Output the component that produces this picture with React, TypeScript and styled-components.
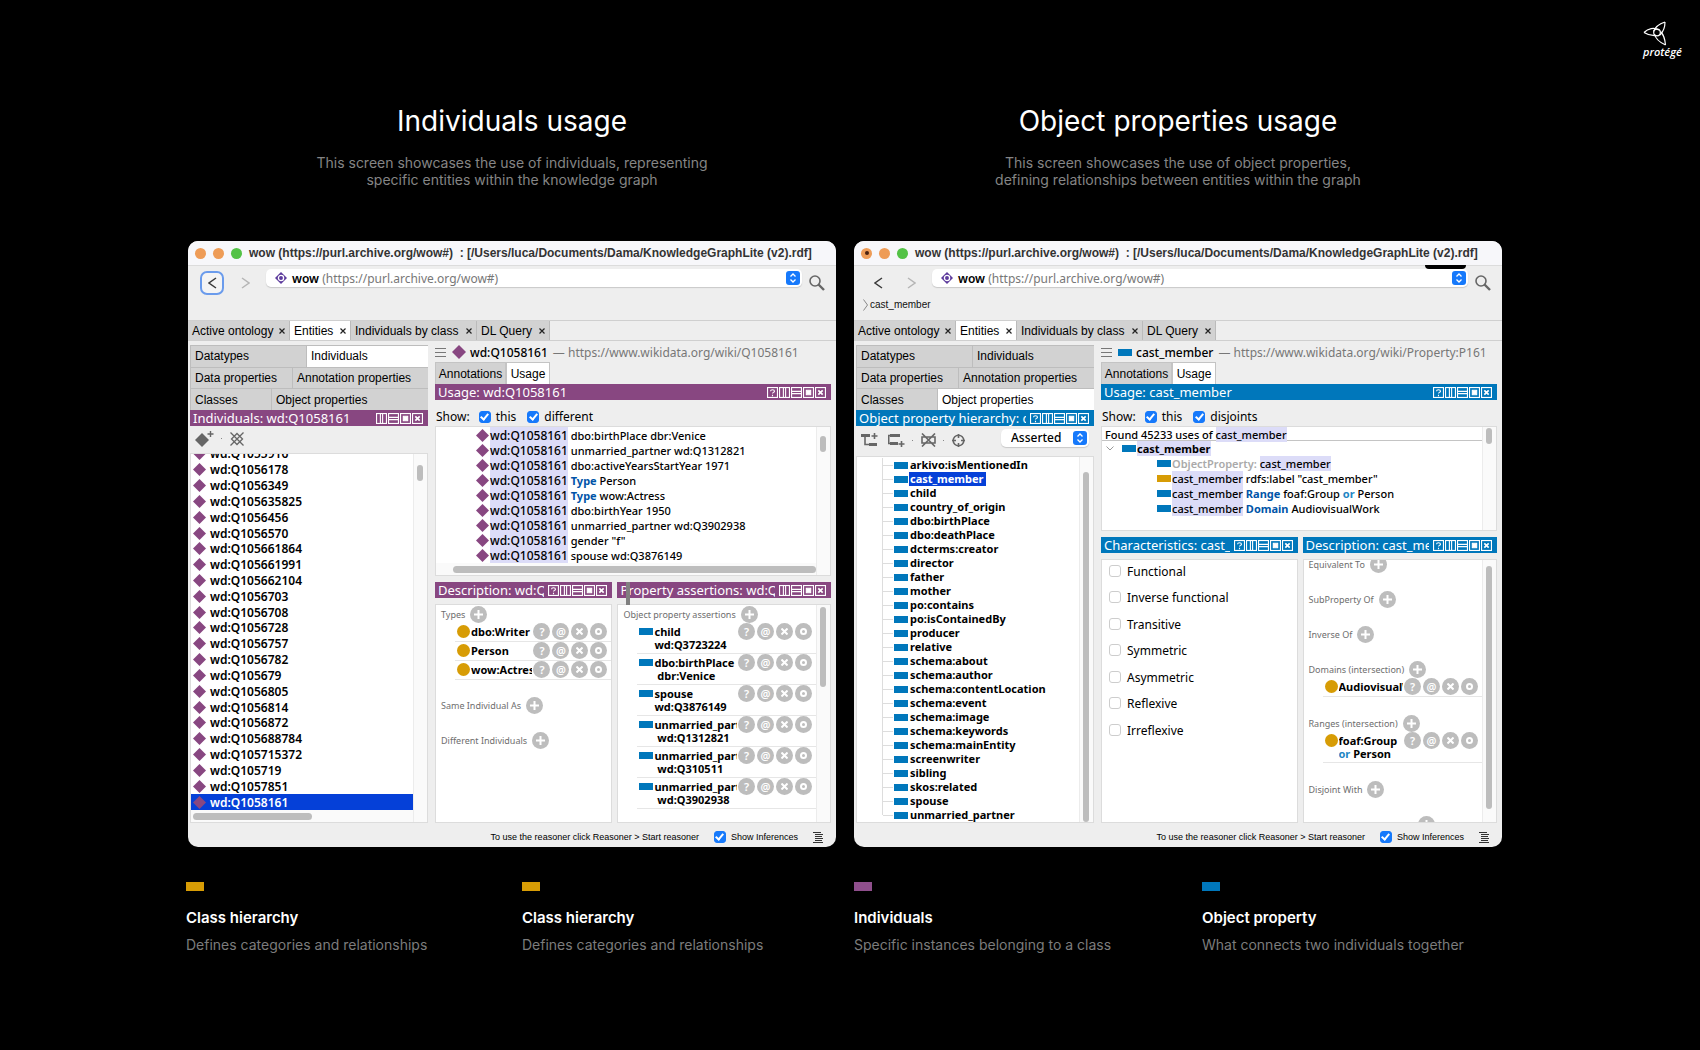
import React from "react";
import styled, { createGlobalStyle, css } from "styled-components";

const PURPLE = "#884781";
const BLUE = "#0077bb";
const GOLD = "#d79c05";
const GREY = "#bdbdbd";
const LUCIDA = `"Noto Sans", "Open Sans", sans-serif`;
const HELVETICA = `"Liberation Sans", Arial, sans-serif`;
const INTER = `Inter, Roboto, sans-serif`;

const GlobalStyle = createGlobalStyle`
  *, *::before, *::after { box-sizing: border-box; }
  body { margin: 0; background: #000; font-family: ${INTER}; }
  h1, h2, p, ul { margin: 0; padding: 0; }
  ul { list-style: none; }
  button, select, input { font: inherit; margin: 0; padding: 0; border: 0; background: none; color: inherit; }
  svg { display: block; flex: none; }
`;

/* ---------- page ---------- */

const Page = styled.main`
  min-height: 100vh;
  background: #000;
  color: #fff;
`;

const TopBar = styled.header`
  display: flex;
  justify-content: flex-end;
  height: 101px;
  padding: 21px 19px 0 0;
`;

const Brand = styled.div`
  display: flex;
  flex-direction: column;
  width: 38px;
  font: italic 600 11px/12px "Open Sans", sans-serif;
`;

const Showcase = styled.div`
  display: grid;
  grid-template-columns: 1fr 1fr;
  gap: 18px;
  padding: 0 198px 0 188px;
`;

const Column = styled.section`
  display: flex;
  flex-direction: column;
  min-width: 0;
`;

const Title = styled.h1`
  font: 400 28px/40px ${INTER};
  text-align: center;
`;

const Lead = styled.p`
  height: 87px;
  margin-top: 13px;
  color: #858585;
  font: 400 14px/17px ${INTER};
  text-align: center;
`;

const Legend = styled.ul`
  display: grid;
  grid-template-columns: 336fr 332fr 348fr 300fr;
  padding: 35px 198px 0 186px;
`;

const Swatch = styled.i<{ $color: string }>`
  display: block;
  width: 18px;
  height: 9px;
  background: ${(p) => p.$color};
`;

const LegendTitle = styled.h2`
  margin-top: 16px;
  font: 600 15px/22px ${INTER};
`;

const LegendText = styled.p`
  margin-top: 6px;
  color: #7c7c7c;
  font: 400 14px/20px ${INTER};
`;

/* ---------- window ---------- */

const Window = styled.article`
  display: flex;
  flex-direction: column;
  overflow: hidden;
  border-radius: 10px;
  background: #eee;
  color: #000;
  font: 12px/15px ${LUCIDA};
  white-space: nowrap;
`;

const TitleBar = styled.div`
  display: flex;
  align-items: center;
  height: 25px;
  padding-left: 7px;
  border-bottom: 1px solid #dcdcdc;
  background: #f7f7fa;
`;

const Light = styled.button<{ $color: string; $dot?: boolean }>`
  display: grid;
  place-items: center;
  width: 11px;
  height: 11px;
  margin-right: 7px;
  border-radius: 50%;
  background: ${(p) => p.$color};
  ${(p) =>
    p.$dot &&
    css`
      &::after {
        content: "";
        width: 4px;
        height: 4px;
        border-radius: 50%;
        background: #4a2110;
      }
    `}
`;

const WindowTitle = styled.span`
  color: #333;
  font: 700 12px/16px ${HELVETICA};
  white-space: pre;
`;

const Toolbar = styled.div`
  display: grid;
  grid-template-columns: 24px 42px 1fr 34px;
  grid-template-rows: 29px 1fr;
  height: 54px;
  padding: 3px 0 0 12px;
`;

const NavButton = styled.button<{ $focus?: boolean; $muted?: boolean }>`
  display: grid;
  place-items: center;
  width: 24px;
  height: 24px;
  margin-top: 2px;
  border: 2px solid ${(p) => (p.$focus ? "#6a9bec" : "transparent")};
  border-radius: 7px;
  background: ${(p) => (p.$focus ? "#f4f4f4" : "none")};
  color: ${(p) => (p.$muted ? "#b5b5b5" : "#3a3a3a")};
  justify-self: ${(p) => (p.$muted ? "center" : "start")};
`;

const Combo = styled.div`
  position: relative;
  display: flex;
  align-items: center;
  height: 18px;
  padding: 0 2px 0 9px;
  border-radius: 5px;
  background: #fff;
  box-shadow: 0 1px 1px #c8c8c8;
`;

const ComboText = styled.span`
  flex: 1;
  padding-left: 5px;
  color: #777;
  b { color: #000; font-weight: 600; }
`;

const HiddenSelect = styled.select`
  position: absolute;
  inset: 0;
  width: 100%;
  opacity: 0;
`;

const Stain = styled.i`
  position: absolute;
  top: -4px;
  right: 2px;
  width: 41px;
  height: 4px;
  border-radius: 0 0 12px 12px;
  background: #000;
`;

const SearchButton = styled.button`
  display: grid;
  place-items: center;
  width: 18px;
  height: 18px;
  margin: 5px 0 0 6px;
`;

const Crumb = styled.a`
  display: flex;
  align-items: center;
  grid-column: 1 / -1;
  gap: 2px;
  height: 12px;
  margin: 1px 0 0 -3px;
  color: #111;
  font: 10px/12px ${HELVETICA};
  text-decoration: none;
`;

const MainTabs = styled.nav`
  display: flex;
  height: 21px;
  border: 1px solid #cfcfcf;
  border-width: 1px 0;
  font: 12px/18px ${HELVETICA};
`;

const MainTab = styled.button<{ $active?: boolean; $width: number }>`
  display: flex;
  align-items: center;
  justify-content: space-between;
  width: ${(p) => p.$width}px;
  padding: 1px 4px 0;
  border-right: 1px solid #bbb;
  background: ${(p) => (p.$active ? "#fff" : "#d2d2d2")};
`;

const Body = styled.div`
  display: grid;
  grid-template-columns: 238px minmax(0, 1fr);
  gap: 7px;
  min-height: 482px;
  padding: 4px 5px 0 2px;
`;

const Pane = styled.div`
  display: flex;
  flex-direction: column;
  min-width: 0;
`;

const EntityTabs = styled.div`
  display: grid;
  grid-auto-rows: 1fr;
  height: 65px;
  font: 12px/20px ${HELVETICA};
`;

const EntityRow = styled.div<{ $split: number }>`
  display: grid;
  grid-template-columns: ${(p) => p.$split}px 1fr;
`;

const EntityTab = styled.button<{ $active?: boolean }>`
  padding-left: 4px;
  border: 1px solid #bdbdbd;
  border-width: 1px 0 0 1px;
  background: ${(p) => (p.$active ? "#fff" : "#d2d2d2")};
  text-align: left;
`;

const Bar = styled.div<{ $color: string }>`
  position: relative;
  display: flex;
  align-items: center;
  gap: 1px;
  height: 16px;
  padding: 0 5px 0 3px;
  background: ${(p) => p.$color};
  color: #fff;
`;

const BarTitle = styled.h2`
  flex: 1;
  min-width: 0;
  margin-right: 3px;
  overflow: hidden;
  font: 400 13px/16px ${LUCIDA};
`;

const BarButton = styled.button`
  display: block;
  width: 11px;
  height: 11px;
`;

const Splitter = styled.i`
  position: absolute;
  top: 0;
  left: 9px;
  width: 4px;
  height: 23px;
  background: #808080;
`;

const Tools = styled.div<{ $height: number }>`
  display: flex;
  align-items: center;
  height: ${(p) => p.$height}px;
  padding: 0 5px 2px 5px;
  color: #000;
`;

const ToolButton = styled.button`
  display: block;
  margin-right: 3px;
`;

const Gap = styled.i<{ $width: number }>`
  flex: none;
  width: ${(p) => p.$width}px;
`;

const Dot = styled.i`
  width: 1px;
  height: 1px;
  margin: 0 8px 0 4px;
  background: #888;
`;

const MiniCombo = styled.label`
  display: flex;
  align-items: center;
  width: 88px;
  height: 18px;
  margin: 0 0 4px auto;
  padding-right: 2px;
  border-radius: 5px;
  background: #fff;
  box-shadow: 0 1px 1px #c8c8c8;
`;

const PlainSelect = styled.select`
  flex: 1;
  min-width: 0;
  padding-left: 10px;
  appearance: none;
  font: 500 12px/16px ${LUCIDA};
`;

const Well = styled.div<{ $height?: number }>`
  display: flex;
  min-height: 0;
  overflow: hidden;
  border: 1px solid #dcdcdc;
  background: #fff;
  ${(p) => (p.$height ? `height: ${p.$height}px;` : "flex: 1 1 0;")}
`;

const Stack = styled.div`
  display: flex;
  flex: 1;
  flex-direction: column;
  min-width: 0;
`;

const VTrack = styled.div`
  flex: none;
  width: 14px;
  padding: 0 4px 0 3px;
  border-left: 1px solid #ececec;
  background: #fafafa;
`;

const VThumb = styled.div<{ $top: number; $size: number }>`
  height: ${(p) => p.$size}px;
  margin-top: ${(p) => p.$top}px;
  border-radius: 4px;
  background: ${GREY};
`;

const HTrack = styled.div<{ $left: number }>`
  flex: none;
  height: 12px;
  padding: 3px 0 2px ${(p) => p.$left}px;
  background: #fafafa;
`;

const HThumb = styled.div<{ $size: string }>`
  width: ${(p) => p.$size};
  height: 7px;
  border-radius: 4px;
  background: ${GREY};
`;

const Clip = styled.div`
  display: flex;
  flex: 1;
  flex-direction: column;
  justify-content: flex-end;
  min-height: 0;
  overflow: hidden;
`;

const IndividualList = styled.ul`
  display: grid;
  flex: none;
  grid-auto-rows: 1fr;
  height: 364px;
  font-weight: 600;
`;

const IndividualItem = styled.li<{ $selected?: boolean }>`
  display: flex;
  align-items: center;
  gap: 4px;
  padding-left: 2px;
  background: ${(p) => (p.$selected ? "#0540d8" : "none")};
  color: ${(p) => (p.$selected ? "#fff" : "#000")};
`;

const Tree = styled.ul`
  display: grid;
  grid-auto-rows: 1fr;
  height: 367px;
  margin-top: 1px;
  font-size: 11px;
  font-weight: 700;
`;

const TreeItem = styled.li`
  display: flex;
  align-items: center;
  margin-left: 25px;
  border-left: 1px solid #ddd;
  &::before {
    content: "";
    width: 10px;
    height: 1px;
    margin-right: 1px;
    background: #ddd;
  }
  &:last-child { border-image: linear-gradient(#ddd 50%, transparent 50%) 1; }
`;

const TreeLabel = styled.span<{ $selected?: boolean }>`
  margin-left: 1px;
  padding: 0 2px 0 1px;
  background: ${(p) => (p.$selected ? "#0540d8" : "none")};
  color: ${(p) => (p.$selected ? "#fff" : "#000")};
  line-height: 14px;
`;

const Rect = styled.i<{ $color?: string }>`
  flex: none;
  width: 14px;
  height: 7px;
  background: ${(p) => p.$color || BLUE};
`;

const Disc = styled.i`
  flex: none;
  width: 13px;
  height: 13px;
  border-radius: 50%;
  background: ${GOLD};
`;

const EntityLine = styled.div`
  display: flex;
  align-items: center;
  height: 17px;
  padding-bottom: 3px;
  color: #777;
  b { margin: 0 5px 0 4px; color: #000; font-weight: 500; }
`;

const SubTabs = styled.div`
  display: flex;
  height: 22px;
  font: 12px/20px ${HELVETICA};
`;

const SubTab = styled.button<{ $active?: boolean; $width: number }>`
  width: ${(p) => p.$width}px;
  border: 1px solid #c4c4c4;
  border-width: 1px 1px 0;
  background: ${(p) => (p.$active ? "#fff" : "#d2d2d2")};
`;

const ShowRow = styled.div`
  display: flex;
  align-items: center;
  height: 26px;
  padding: 7px 0 0 1px;
`;

const CheckLabel = styled.label<{ $gap?: number }>`
  display: flex;
  align-items: center;
  gap: 5px;
  margin-left: ${(p) => p.$gap || 0}px;
`;

const Check = styled.input`
  display: grid;
  place-items: center;
  width: 12px;
  height: 12px;
  appearance: none;
  border: 1px solid #cdcdcd;
  border-radius: 3px;
  background: #fff;
  &:checked { border-color: #1679fb; background: #1679fb; }
  &:checked::after {
    content: "";
    width: 5px;
    height: 8px;
    margin-top: -2px;
    border: solid #fff;
    border-width: 0 2px 2px 0;
    transform: rotate(40deg);
  }
`;

const UsageList = styled.ul<{ $indent: number }>`
  flex: 1;
  min-height: 0;
  padding: 1px 0 0 ${(p) => p.$indent}px;
  overflow: hidden;
  font-size: 11px;
`;

const UsageItem = styled.li`
  display: flex;
  align-items: center;
  gap: 1px;
  height: 15px;
  font-weight: 500;
`;

const Mark = styled.mark<{ $size?: number }>`
  background: #dcdcf8;
  color: #000;
  font-size: ${(p) => (p.$size ? `${p.$size}px` : "inherit")};
`;

const Keyword = styled.b<{ $light?: boolean }>`
  color: ${(p) => (p.$light ? "#1f86c4" : "#0054a8")};
  font-weight: 700;
`;

const Faint = styled.b`
  color: #aaa;
  font-weight: 600;
`;

const Found = styled.div`
  height: 14px;
  padding-left: 3px;
  border-bottom: 1px solid #c4c4c4;
  font-size: 11px;
  font-weight: 500;
`;

const UsageRoot = styled.div`
  display: flex;
  align-items: center;
  gap: 1px;
  height: 14px;
  padding-left: 4px;
  font-size: 11px;
  font-weight: 700;
  svg { margin-right: 7px; }
`;

const Lower = styled.div<{ $cols: string }>`
  display: grid;
  flex: 1;
  grid-template-columns: ${(p) => p.$cols};
  gap: 5px;
  min-height: 0;
  margin-top: 6px;
`;

const LowerPane = styled(Pane)`
  gap: 6px;
`;

const Sections = styled.div`
  display: flex;
  flex: 1;
  flex-direction: column;
  min-width: 0;
  overflow: hidden;
  padding-top: 1px;
`;

const ScrolledSections = styled(Sections)`
  justify-content: flex-end;
  padding-top: 0;
`;

const SectionHead = styled.div<{ $space?: number }>`
  display: flex;
  flex: none;
  align-items: center;
  gap: 5px;
  height: 17px;
  margin-bottom: ${(p) => p.$space || 0}px;
  padding-left: 5px;
  color: #6e6e6e;
  font-size: 9px;
`;

const PeekingHead = styled.div`
  flex: none;
  height: 6px;
  padding-left: 114px;
  overflow: hidden;
`;

const Entry = styled.div<{ $rows: number; $space?: number }>`
  display: flex;
  flex: none;
  gap: 1px;
  height: ${(p) => (p.$rows === 1 ? 19 : 31)}px;
  margin: 0 0 ${(p) => p.$space || 0}px 19px;
  padding: 0 4px 0 2px;
  border-bottom: 1px solid #e6e6e6;
  font-size: 11px;
  font-weight: 700;
`;

const EntryIcon = styled.span`
  display: flex;
  flex: none;
  align-items: center;
  height: 16px;
`;

const EntryText = styled.div`
  flex: 1;
  min-width: 0;
  overflow: hidden;
  line-height: 13px;
  padding-top: 2px;
`;

const EntryButtons = styled.div`
  display: flex;
  flex: none;
  gap: 2px;
`;

const Round = styled.button`
  display: grid;
  flex: none;
  place-items: center;
  width: 17px;
  height: 17px;
  border-radius: 50%;
  background: ${GREY};
  color: #fff;
  font: 600 11px/16px ${LUCIDA};
`;

const Traits = styled.div`
  display: grid;
  grid-auto-rows: 1fr;
  height: 185px;
  padding-left: 7px;
`;

const Trait = styled(CheckLabel)`
  align-items: flex-start;
  gap: 6px;
  padding-top: 4px;
  input { margin-top: 1px; }
`;

const Status = styled.footer`
  display: flex;
  align-items: center;
  justify-content: flex-end;
  height: 24px;
  padding: 4px 13px 0 0;
  font: 9px/12px ${HELVETICA};
  svg { margin-left: 15px; }
`;

/* ---------- drawings ---------- */

const Logo = () => (
  <svg width="24" height="25" viewBox="0 0 24 25" fill="none" stroke="#fff" strokeWidth="1.200">
    <path d="M1 11.500C5 7.500 11 6 16 9M1 11.500C5 14 9 15 13.500 14.500" />
    <path d="M22 1C16 3 12 6 10.500 10.500M22 1C22 6 20 11 17 14" />
    <path d="M22.500 24C17 21.500 12.500 18 11.500 13M22.500 24C22 18 20 13 17.500 10.500" />
    <circle cx="14" cy="11.500" r="3.300" />
  </svg>
);

const Diamond = ({ size = 13 }: { size?: number }) => (
  <svg width={size} height={size} viewBox="0 0 14 14">
    <path d="M7 0L14 7L7 14L0 7Z" fill={PURPLE} />
  </svg>
);

const OntologyIcon = () => (
  <svg width="12" height="12" viewBox="0 0 12 12">
    <path d="M6 0L12 6L6 12L0 6Z" fill="#5c3a9c" />
    <circle cx="6" cy="6" r="2.600" fill="none" stroke="#fff" strokeWidth="1.300" />
  </svg>
);

const Chevron = ({ flip }: { flip?: boolean }) => (
  <svg width="9" height="12" viewBox="0 0 9 12" fill="none" stroke="currentColor" strokeWidth="1.500">
    <path d={flip ? "M1 1L8 6L1 11" : "M8 1L1 6L8 11"} />
  </svg>
);

const Stepper = () => (
  <svg width="14" height="14" viewBox="0 0 14 14">
    <rect width="14" height="14" rx="3" fill="#1679fb" />
    <path d="M4.500 5.500L7 3L9.500 5.500M4.500 8.500L7 11L9.500 8.500" fill="none" stroke="#fff" strokeWidth="1.300" />
  </svg>
);

const SearchIcon = () => (
  <svg width="16" height="16" viewBox="0 0 16 16" fill="none" stroke="#666">
    <circle cx="6" cy="6" r="5" strokeWidth="1.600" />
    <path d="M9.500 9.500L15 15" strokeWidth="2.400" />
  </svg>
);

const Cross = () => (
  <svg width="6" height="6" viewBox="0 0 6 6" stroke="#222" strokeWidth="1.200">
    <path d="M0.500 0.500L5.500 5.500M5.500 0.500L0.500 5.500" />
  </svg>
);

const Lines = () => (
  <svg width="11" height="9" viewBox="0 0 11 9" stroke="#777">
    <path d="M0 0.500H11M0 4.500H11M0 8.500H11" />
  </svg>
);

const AddIndividual = () => (
  <svg width="19" height="16" viewBox="0 0 19 16">
    <path d="M7 2L14 9L7 16L0 9Z" fill="#666" />
    <path d="M15.500 0V6M12.500 3H18.500" stroke="#666" strokeWidth="1.400" />
  </svg>
);

const DeleteIndividual = () => (
  <svg width="14" height="14" viewBox="0 0 14 14" fill="none" stroke="#666" strokeWidth="1.300">
    <path d="M7 1.500L12.500 7L7 12.500L1.500 7ZM0.500 0.500L13.500 13.500M13.500 0.500L0.500 13.500" />
  </svg>
);

const AddSub = () => (
  <svg width="17" height="14" viewBox="0 0 17 14">
    <path d="M0 1H9V4H0ZM8 10H16V13H8Z" fill="#666" />
    <path d="M4 4V11.500H8M13.500 0V6M10.500 3H16.500" fill="none" stroke="#666" strokeWidth="1.600" />
  </svg>
);

const AddSibling = () => (
  <svg width="17" height="14" viewBox="0 0 17 14">
    <path d="M2 1H12V4H2ZM2 9H10V12H2Z" fill="#666" />
    <path d="M3 2.500H0.700V10.500H3M13.500 8V14M10.500 11H16.500" fill="none" stroke="#666" strokeWidth="1.600" />
  </svg>
);

const DeleteProperty = () => (
  <svg width="15" height="14" viewBox="0 0 15 14" fill="none" stroke="#666" strokeWidth="1.600">
    <path d="M1 4H14V10H1ZM1 0.500L14 13.500M14 0.500L1 13.500" />
  </svg>
);

const Target = () => (
  <svg width="13" height="13" viewBox="0 0 13 13" fill="none" stroke="#666" strokeWidth="1.600">
    <circle cx="6.500" cy="6.500" r="5.300" />
    <path d="M6.500 0V4M6.500 9V13M0 6.500H4M9 6.500H13" />
  </svg>
);

const ListIcon = () => (
  <svg width="10" height="11" viewBox="0 0 10 11" stroke="#333">
    <path d="M0 0.500H8M2 2.500H10M2 4.500H9M2 6.500H10M2 8.500H9M0 10.500H10" />
  </svg>
);

const PlusGlyph = () => (
  <svg width="9" height="9" viewBox="0 0 9 9" stroke="#fff" strokeWidth="2">
    <path d="M4.500 0V9M0 4.500H9" />
  </svg>
);

const barGlyphs: Record<string, React.ReactNode> = {
  Help: <path d="M3.200 3.800C3.200 2 6.800 2 6.800 3.800C6.800 5 5 4.800 5 6M5 7V8.300" />,
  "Split vertically": <path d="M4 0V10M6 0V10" />,
  "Split horizontally": <path d="M0 4H10M0 6H10" />,
  Maximize: <path d="M3 3H7V7H3Z" fill="#fff" />,
  Close: <path d="M3 3L7 7M7 3L3 7" strokeWidth="1.500" />,
};

/* ---------- composites ---------- */

const PanelBar = ({ title, color, help = true, children }: { title: string; color: string; help?: boolean; children?: React.ReactNode }) => (
  <Bar $color={color}>
    <BarTitle>{title}</BarTitle>
    {Object.entries(barGlyphs)
      .filter(([name]) => help || name !== "Help")
      .map(([name, glyph]) => (
        <BarButton key={name} aria-label={name}>
          <svg width="11" height="11" viewBox="0 0 10 10" fill="none" stroke="#fff" strokeWidth="1">
            <rect x="0.500" y="0.500" width="9" height="9" />
            {glyph}
          </svg>
        </BarButton>
      ))}
    {children}
  </Bar>
);

const Section = ({ name, space }: { name: string; space?: number }) => (
  <SectionHead $space={space}>
    {name}
    <Round aria-label={`Add ${name}`}>
      <PlusGlyph />
    </Round>
  </SectionHead>
);

const Assertion = ({ icon, rows = 1, space, children }: { icon: React.ReactNode; rows?: number; space?: number; children: React.ReactNode }) => (
  <Entry $rows={rows} $space={space}>
    <EntryIcon>{icon}</EntryIcon>
    <EntryText>{children}</EntryText>
    <EntryButtons>
      <Round aria-label="Explain">?</Round>
      <Round aria-label="Annotate">@</Round>
      <Round aria-label="Remove">
        <svg width="7" height="7" viewBox="0 0 7 7" stroke="#fff" strokeWidth="2">
          <path d="M0.500 0.500L6.500 6.500M6.500 0.500L0.500 6.500" />
        </svg>
      </Round>
      <Round aria-label="Edit">
        <svg width="7" height="7" viewBox="0 0 7 7" fill="none" stroke="#fff" strokeWidth="2">
          <circle cx="3.500" cy="3.500" r="2.500" />
        </svg>
      </Round>
    </EntryButtons>
  </Entry>
);

const mainTabs: [string, number][] = [
  ["Active ontology", 102],
  ["Entities", 61],
  ["Individuals by class", 126],
  ["DL Query", 73],
];

const entityTabs: [number, string, string][] = [
  [116, "Datatypes", "Individuals"],
  [102, "Data properties", "Annotation properties"],
  [81, "Classes", "Object properties"],
];

interface FrameProps {
  entityTab: string;
  crumb?: string;
  side: React.ReactNode;
  children: React.ReactNode;
}

const Frame = ({ entityTab, crumb, side, children }: FrameProps) => (
  <Window>
    <TitleBar>
      <Light $color="#ee9c57" $dot={!!crumb} aria-label="Close" />
      <Light $color="#ee9c57" aria-label="Minimize" />
      <Light $color="#53c246" aria-label="Zoom" />
      <WindowTitle>{"wow (https://purl.archive.org/wow#)  : [/Users/luca/Documents/Dama/KnowledgeGraphLite (v2).rdf]"}</WindowTitle>
    </TitleBar>
    <Toolbar>
      <NavButton $focus={!crumb} aria-label="Back">
        <Chevron />
      </NavButton>
      <NavButton $muted aria-label="Forward">
        <Chevron flip />
      </NavButton>
      <Combo>
        <OntologyIcon />
        <ComboText>
          <b>wow</b> (https://purl.archive.org/wow#)
        </ComboText>
        <Stepper />
        <HiddenSelect aria-label="Active ontology">
          <option>wow</option>
        </HiddenSelect>
        {crumb && <Stain />}
      </Combo>
      <SearchButton aria-label="Search">
        <SearchIcon />
      </SearchButton>
      {crumb && (
        <Crumb href="#">
          <svg width="5" height="12" viewBox="0 0 5 12" fill="none" stroke="#888">
            <path d="M0.500 0.500L4.500 6L0.500 11.500" />
          </svg>
          {crumb}
        </Crumb>
      )}
    </Toolbar>
    <MainTabs>
      {mainTabs.map(([name, width]) => (
        <MainTab key={name} $width={width} $active={name === "Entities"}>
          {name}
          <Cross />
        </MainTab>
      ))}
    </MainTabs>
    <Body>
      <Pane>
        <EntityTabs>
          {entityTabs.map(([split, a, b]) => (
            <EntityRow key={a} $split={split}>
              <EntityTab $active={a === entityTab}>{a}</EntityTab>
              <EntityTab $active={b === entityTab}>{b}</EntityTab>
            </EntityRow>
          ))}
        </EntityTabs>
        {side}
      </Pane>
      <Pane>{children}</Pane>
    </Body>
    <Status>
      To use the reasoner click Reasoner &gt; Start reasoner
      <CheckLabel $gap={15}>
        <Check type="checkbox" defaultChecked />
        Show Inferences
      </CheckLabel>
      <ListIcon />
    </Status>
  </Window>
);

const UsageHead = ({ icon, name, url, color, other }: { icon: React.ReactNode; name: string; url: string; color: string; other: string }) => (
  <>
    <EntityLine>
      <Lines />
      <Gap $width={6} />
      {icon}
      <b>{name}</b>— {url}
    </EntityLine>
    <SubTabs>
      <SubTab $width={71}>Annotations</SubTab>
      <SubTab $width={44} $active>
        Usage
      </SubTab>
    </SubTabs>
    <PanelBar title={`Usage: ${name}`} color={color} />
    <ShowRow>
      Show:
      <CheckLabel $gap={9}>
        <Check type="checkbox" defaultChecked />
        this
      </CheckLabel>
      <CheckLabel $gap={11}>
        <Check type="checkbox" defaultChecked />
        {other}
      </CheckLabel>
    </ShowRow>
  </>
);

const individuals =
  "1055916 1056178 1056349 105635825 1056456 1056570 105661864 105661991 105662104 1056703 1056708 1056728 1056757 1056782 105679 1056805 1056814 1056872 105688784 105715372 105719 1057851 1058161".split(" ");

const properties =
  "arkivo:isMentionedIn cast_member child country_of_origin dbo:birthPlace dbo:deathPlace dcterms:creator director father mother po:contains po:isContainedBy producer relative schema:about schema:author schema:contentLocation schema:event schema:image schema:keywords schema:mainEntity screenwriter sibling skos:related spouse unmarried_partner".split(" ");

const usages: React.ReactNode[] = [
  "dbo:birthPlace dbr:Venice",
  "unmarried_partner wd:Q1312821",
  "dbo:activeYearsStartYear 1971",
  <><Keyword>Type</Keyword> Person</>,
  <><Keyword>Type</Keyword> wow:Actress</>,
  "dbo:birthYear 1950",
  "unmarried_partner wd:Q3902938",
  'gender "f"',
  "spouse wd:Q3876149",
];

const assertions: [string, string][] = [
  ["child", "wd:Q3723224"],
  ["dbo:birthPlace", " dbr:Venice"],
  ["spouse", "wd:Q3876149"],
  ["unmarried_partner", " wd:Q1312821"],
  ["unmarried_partner", " wd:Q310511"],
  ["unmarried_partner", " wd:Q3902938"],
];

const Value = styled.span`
  white-space: pre;
`;

const traits = ["Functional", "Inverse functional", "Transitive", "Symmetric", "Asymmetric", "Reflexive", "Irreflexive"];

const IndividualsWindow = () => (
  <Frame
    entityTab="Individuals"
    side={
      <>
        <PanelBar title="Individuals: wd:Q1058161" color={PURPLE} help={false} />
        <Tools $height={27}>
          <ToolButton aria-label="Add individual"><AddIndividual /></ToolButton>
          <Dot />
          <ToolButton aria-label="Delete individual"><DeleteIndividual /></ToolButton>
        </Tools>
        <Well>
          <Stack>
            <Clip>
              <IndividualList>
                {individuals.map((id) => (
                  <IndividualItem key={id} $selected={id === "1058161"}>
                    <Diamond />
                    wd:Q{id}
                  </IndividualItem>
                ))}
              </IndividualList>
            </Clip>
            <HTrack $left={2}>
              <HThumb $size="119px" />
            </HTrack>
          </Stack>
          <VTrack>
            <VThumb $top={11} $size={16} />
          </VTrack>
        </Well>
      </>
    }
  >
    <UsageHead icon={<Diamond size={14} />} name="wd:Q1058161" url="https://www.wikidata.org/wiki/Q1058161" color={PURPLE} other="different" />
    <Well $height={150}>
      <Stack>
        <UsageList $indent={40}>
          {usages.map((usage, i) => (
            <UsageItem key={i}>
              <Diamond />
              <span>
                <Mark $size={12}>wd:Q1058161</Mark> {usage}
              </span>
            </UsageItem>
          ))}
        </UsageList>
        <HTrack $left={17}>
          <HThumb $size="100%" />
        </HTrack>
      </Stack>
      <VTrack>
        <VThumb $top={9} $size={16} />
      </VTrack>
    </Well>
    <Lower $cols="minmax(0, 177fr) minmax(0, 213fr)">
      <LowerPane>
        <PanelBar title="Description: wd:Q1058161" color={PURPLE} />
        <Well>
          <Sections>
            <Section name="Types" />
            <Assertion icon={<Disc />}>dbo:Writer</Assertion>
            <Assertion icon={<Disc />}>Person</Assertion>
            <Assertion icon={<Disc />} space={17}>wow:Actress</Assertion>
            <Section name="Same Individual As" space={18} />
            <Section name="Different Individuals" />
          </Sections>
        </Well>
      </LowerPane>
      <LowerPane>
        <PanelBar title="Property assertions: wd:Q1058161" color={PURPLE} help={false}>
          <Splitter />
        </PanelBar>
        <Well>
          <Sections>
            <Section name="Object property assertions" />
            {assertions.map(([property, value], i) => (
              <Assertion key={i} rows={2} icon={<Rect />}>
                {property}
                <br />
                <Value>{value}</Value>
              </Assertion>
            ))}
          </Sections>
          <VTrack>
            <VThumb $top={2} $size={80} />
          </VTrack>
        </Well>
      </LowerPane>
    </Lower>
  </Frame>
);

const PropertiesWindow = () => (
  <Frame
    entityTab="Object properties"
    crumb="cast_member"
    side={
      <>
        <PanelBar title="Object property hierarchy: cast_member" color={BLUE} />
        <Tools $height={30}>
          <ToolButton aria-label="Add sub property"><AddSub /></ToolButton>
          <Gap $width={7} />
          <ToolButton aria-label="Add sibling property"><AddSibling /></ToolButton>
          <Dot />
          <ToolButton aria-label="Delete property"><DeleteProperty /></ToolButton>
          <Dot />
          <ToolButton aria-label="Locate"><Target /></ToolButton>
          <MiniCombo>
            <PlainSelect aria-label="Hierarchy">
              <option>Asserted</option>
            </PlainSelect>
            <Stepper />
          </MiniCombo>
        </Tools>
        <Well>
          <Stack>
            <Tree>
              {properties.map((name) => (
                <TreeItem key={name}>
                  <Rect />
                  <TreeLabel $selected={name === "cast_member"}>{name}</TreeLabel>
                </TreeItem>
              ))}
            </Tree>
          </Stack>
          <VTrack>
            <VThumb $top={15} $size={350} />
          </VTrack>
        </Well>
      </>
    }
  >
    <UsageHead icon={<Rect />} name="cast_member" url="https://www.wikidata.org/wiki/Property:P161" color={BLUE} other="disjoints" />
    <Well $height={105}>
      <Stack>
        <Found>
          Found 45233 uses of <Mark>cast_member</Mark>
        </Found>
        <UsageRoot>
          <svg width="8" height="5" viewBox="0 0 8 5" fill="none" stroke="#999">
            <path d="M0.500 0.500L4 4L7.500 0.500" />
          </svg>
          <Rect />
          <Mark>cast_member</Mark>
        </UsageRoot>
        <UsageList $indent={55}>
          <UsageItem>
            <Rect />
            <span><Faint>ObjectProperty:</Faint> <Mark>cast_member</Mark></span>
          </UsageItem>
          <UsageItem>
            <Rect $color={GOLD} />
            <span><Mark>cast_member</Mark> rdfs:label "cast_member"</span>
          </UsageItem>
          <UsageItem>
            <Rect />
            <span><Mark>cast_member</Mark> <Keyword>Range</Keyword> foaf:Group <Keyword $light>or</Keyword> Person</span>
          </UsageItem>
          <UsageItem>
            <Rect />
            <span><Mark>cast_member</Mark> <Keyword>Domain</Keyword> AudiovisualWork</span>
          </UsageItem>
        </UsageList>
      </Stack>
      <VTrack>
        <VThumb $top={1} $size={16} />
      </VTrack>
    </Well>
    <Lower $cols="minmax(0, 196fr) minmax(0, 194fr)">
      <LowerPane>
        <PanelBar title="Characteristics: cast_member" color={BLUE} />
        <Well>
          <Traits>
            {traits.map((name) => (
              <Trait key={name}>
                <Check type="checkbox" />
                {name}
              </Trait>
            ))}
          </Traits>
        </Well>
      </LowerPane>
      <LowerPane>
        <PanelBar title="Description: cast_member" color={BLUE} />
        <Well>
          <ScrolledSections>
            <Section name="Equivalent To" space={18} />
            <Section name="SubProperty Of" space={18} />
            <Section name="Inverse Of" space={18} />
            <Section name="Domains (intersection)" />
            <Assertion icon={<Disc />} space={18}>AudiovisualWork</Assertion>
            <Section name="Ranges (intersection)" />
            <Assertion icon={<Disc />} rows={2} space={18}>
              foaf:Group
              <br />
              <Keyword $light>or</Keyword> Person
            </Assertion>
            <Section name="Disjoint With" space={18} />
            <PeekingHead>
              <Round aria-label="Add chain">
                <PlusGlyph />
              </Round>
            </PeekingHead>
          </ScrolledSections>
          <VTrack>
            <VThumb $top={6} $size={243} />
          </VTrack>
        </Well>
      </LowerPane>
    </Lower>
  </Frame>
);

const legend: [string, string, string][] = [
  [GOLD, "Class hierarchy", "Defines categories and relationships"],
  [GOLD, "Class hierarchy", "Defines categories and relationships"],
  ["#8f4f8c", "Individuals", "Specific instances belonging to a class"],
  [BLUE, "Object property", "What connects two individuals together"],
];

export default function App() {
  return (
    <Page>
      <GlobalStyle />
      <TopBar>
        <Brand>
          <Logo />
          protégé
        </Brand>
      </TopBar>
      <Showcase>
        <Column>
          <Title>Individuals usage</Title>
          <Lead>
            This screen showcases the use of individuals, representing
            <br />
            specific entities within the knowledge graph
          </Lead>
          <IndividualsWindow />
        </Column>
        <Column>
          <Title>Object properties usage</Title>
          <Lead>
            This screen showcases the use of object properties,
            <br />
            defining relationships between entities within the graph
          </Lead>
          <PropertiesWindow />
        </Column>
      </Showcase>
      <Legend>
        {legend.map(([color, title, text], i) => (
          <li key={i}>
            <Swatch $color={color} />
            <LegendTitle>{title}</LegendTitle>
            <LegendText>{text}</LegendText>
          </li>
        ))}
      </Legend>
    </Page>
  );
}
